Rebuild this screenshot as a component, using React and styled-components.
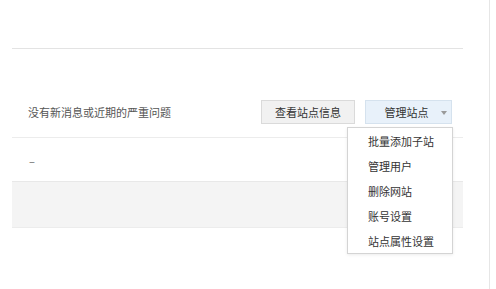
import React from "react";
import styled, { createGlobalStyle } from "styled-components";

const Global = createGlobalStyle`
  html, body { margin: 0; padding: 0; background: #fff; }
  body { font-family: "Noto Sans CJK SC", "Noto Sans", sans-serif; }
  * { box-sizing: border-box; }
`;

const Page = styled.div`
  width: 490px;
  height: 289px;
  border-right: 1px solid #e6e6e6;
  padding: 48px 0 0 12px;
  overflow: hidden;
`;

const Content = styled.div`
  width: 451px;
`;

const Rule = styled.div`
  height: 1px;
  background: #e3e3e3;
  margin-bottom: 51px;
`;

const Toolbar = styled.div`
  height: 38px;
  display: flex;
  align-items: center;
  justify-content: space-between;
  padding: 0 11px 13px 16px;
  border-bottom: 1px solid #ececec;
`;

const Message = styled.span`
  font-size: 11px;
  color: #555;
  line-height: 14px;
`;

const Actions = styled.div`
  display: flex;
  gap: 10px;
  position: relative;
`;

const Button = styled.div`
  height: 24px;
  width: ${(p) => p.$w}px;
  display: flex;
  align-items: center;
  justify-content: center;
  gap: 12px;
  font-size: 11px;
  color: #333;
  background: ${(p) => (p.$primary ? "#e8f1fa" : "#f1f1f1")};
  border: 1px solid ${(p) => (p.$primary ? "#d5e2ee" : "#dadada")};
  padding-left: ${(p) => (p.$primary ? 14 : 0)}px;
`;

const Caret = styled.span`
  width: 0;
  height: 0;
  border-left: 3.5px solid transparent;
  border-right: 3.5px solid transparent;
  border-top: 4px solid #9a9a9a;
  margin-top: 1px;
`;

const Menu = styled.ul`
  position: absolute;
  top: 27px;
  right: -1px;
  width: 106px;
  margin: 0;
  padding: 0;
  list-style: none;
  background: #fff;
  border: 1px solid #d4d4d4;
  box-shadow: 0 1px 3px rgba(0, 0, 0, 0.08);
  z-index: 2;
`;

const MenuItem = styled.li`
  height: 25px;
  line-height: 27px;
  padding-left: 20px;
  font-size: 11px;
  color: #333;
  white-space: nowrap;
`;

const DashRow = styled.div`
  height: 43px;
  display: flex;
  align-items: center;
  padding: 2px 0 0 17px;
  font-size: 11px;
  color: #666;
`;

const GrayRow = styled.div`
  height: 47px;
  background: #f4f4f4;
  border-top: 1px solid #e8e8e8;
  border-bottom: 1px solid #ececec;
`;

const items = ["批量添加子站", "管理用户", "删除网站", "账号设置", "站点属性设置"];

export default function App() {
  return (
    <>
      <Global />
      <Page>
        <Content>
          <Rule />
          <Toolbar>
            <Message>没有新消息或近期的严重问题</Message>
            <Actions>
              <Button $w={94}>查看站点信息</Button>
              <Button $w={87} $primary>
                管理站点
                <Caret />
              </Button>
              <Menu>
                {items.map((t) => (
                  <MenuItem key={t}>{t}</MenuItem>
                ))}
              </Menu>
            </Actions>
          </Toolbar>
          <DashRow>–</DashRow>
          <GrayRow />
        </Content>
      </Page>
    </>
  );
}
